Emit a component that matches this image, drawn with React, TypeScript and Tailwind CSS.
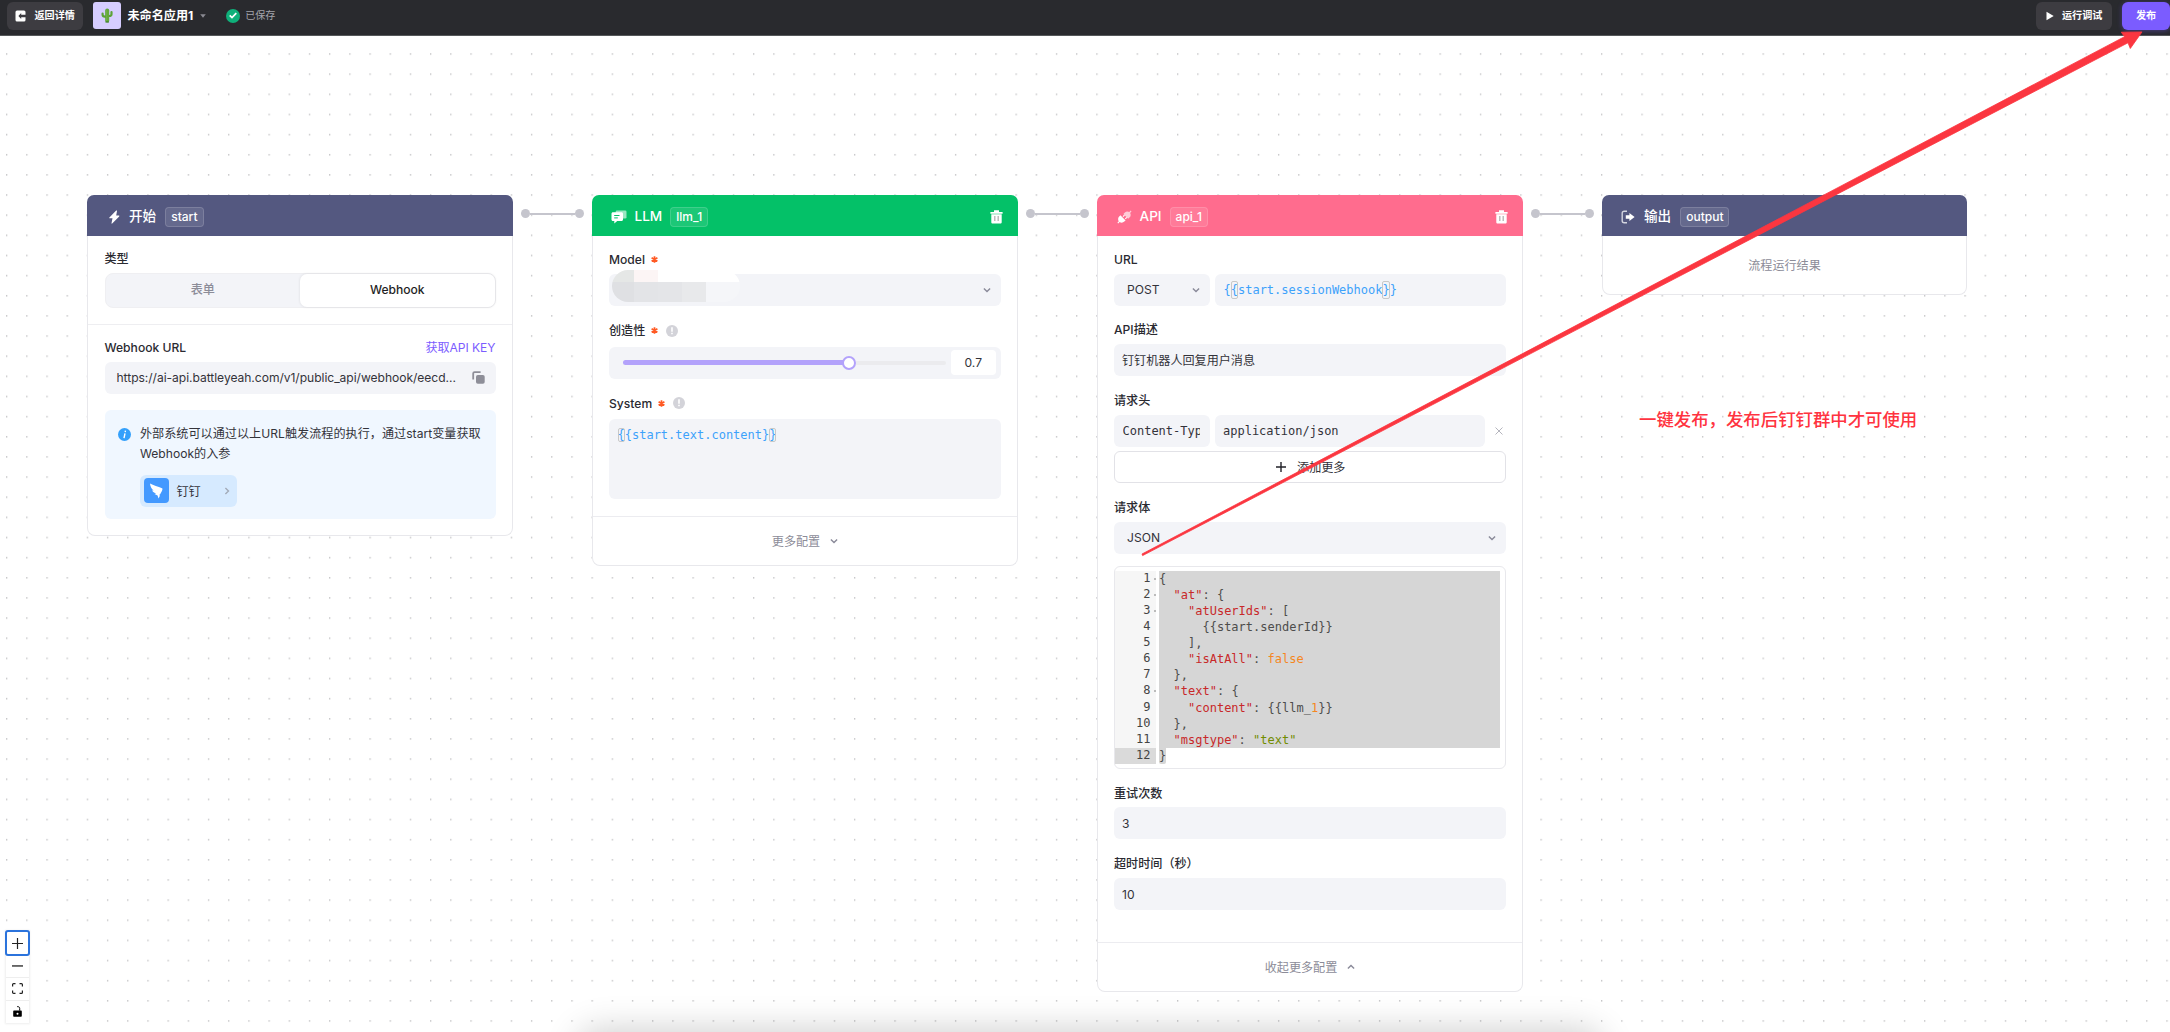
import type { ReactNode } from 'react';
import clsx from 'clsx';

const MONO = "font-['DejaVu_Sans_Mono','Noto_Sans_CJK_SC',monospace]";

function BoltIcon() {
  return (
    <svg width="11" height="14" viewBox="0 0 11 14" fill="#fff">
      <path d="M7.2.6.4 7.4c-.3.3-.1.8.3.8h2.8l-1 5c0 .4.4.6.7.3l7-7.1c.3-.3.1-.8-.3-.8H7.2l.8-4.7c0-.4-.5-.6-.8-.3Z" />
    </svg>
  );
}

function ChatIcon() {
  return (
    <svg width="16" height="14" viewBox="0 0 16 14">
      <path fill="#fff" opacity=".6" d="M6 .5h8.200a1.300 1.300 0 0 1 1.300 1.300v5.500a1.300 1.300 0 0 1-1.300 1.300H6A1.300 1.300 0 0 1 4.700 7.300V1.800A1.300 1.300 0 0 1 6 .5Z" />
      <path fill="#fff" d="M2 2.200h8.500c.9 0 1.500.6 1.500 1.500v5.800c0 .9-.6 1.500-1.500 1.500H6.200L3.300 13.400V11H2C1.100 11 .5 10.400.5 9.500V3.700C.5 2.800 1.100 2.200 2 2.200Z" />
      <path stroke="#04c168" strokeWidth="1" d="M3.200 5.500h5.300M3.200 7.900h3.600" />
    </svg>
  );
}

function PlugIcon() {
  return (
    <svg width="15" height="14" viewBox="0 0 15 14" fill="#fff">
      <path d="m3.400 5.200 5.200 5.200-1.300 1.200c-1.300 1.300-3.300 1.400-4.700.4L1.200 13.500.4 12.700l1.400-1.400C.8 9.900.9 7.800 2.200 6.500Z" />
      <path opacity=".65" d="M12.300 2.100 13.700.6l.8.8-1.400 1.500c.9 1.300.8 3.200-.4 4.400l-1.500 1.500L6.400 4l1.500-1.500c1.200-1.200 3-1.300 4.400-.4Z" />
      <path d="m5.600 6.200 1.500-1.500.8.8L6.400 7ZM7.900 8.500 9.400 7l.8.8-1.500 1.500Z" />
    </svg>
  );
}

function OutputIcon() {
  return (
    <svg width="14" height="14" viewBox="0 0 14 14" fill="none">
      <path stroke="#fff" strokeWidth="1.400" opacity=".75" d="M6 1.200H3.200C2 1.200 1.200 2 1.200 3.200v7.600c0 1.200.8 2 2 2H6" />
      <path fill="#fff" d="M8.400 2.900 13.600 7l-5.200 4.100V8.700H4.800V5.300h3.600Z" />
    </svg>
  );
}

function TrashIcon() {
  return (
    <svg width="13" height="14" viewBox="0 0 13 14">
      <path fill="#fff" d="M4 .3h5V2H4ZM.4 2h12.200v1.700H.4ZM1.300 4.300h10.400v7.900c0 .9-.5 1.400-1.400 1.400H2.700c-.9 0-1.400-.5-1.400-1.400Z" />
      <path stroke="#000" strokeOpacity=".3" strokeWidth="1.300" d="M4.800 6v5M8.200 6v5" />
    </svg>
  );
}

function Chevron({ up = false, className = 'text-[#8a8a99]' }: { up?: boolean; className?: string }) {
  return (
    <svg width="8" height="8" viewBox="0 0 8 8" fill="none" className={clsx(className, up && 'rotate-180')}>
      <path stroke="currentColor" strokeWidth="1.400" d="M.9 2.400 4 5.500l3.100-3.100" />
    </svg>
  );
}

function TipIcon() {
  return (
    <span className="flex size-3 items-center justify-center rounded-full bg-[#d3d3d9]">
      <svg width="4" height="8" viewBox="0 0 4 8" fill="#fff">
        <path d="M1.200.3h1.600v4.500H1.200ZM1.200 5.800h1.600v1.500H1.200Z" />
      </svg>
    </span>
  );
}

function Required() {
  return (
    <svg width="7" height="7" viewBox="0 0 7 7" className="ml-[6px]">
      <path stroke="#ff5a24" strokeWidth="1.700" d="M3.500.2v6.600M.6 1.800l5.800 3.400M6.400 1.800.6 5.200" />
    </svg>
  );
}

function Label({ children, className }: { children: ReactNode; className?: string }) {
  return <div className={clsx('flex h-5 items-center text-[12.1px] font-medium leading-5 text-[#2a2a31]', className)}>{children}</div>;
}

function Field({ children, className }: { children?: ReactNode; className?: string }) {
  return <div className={clsx('flex h-8 items-center rounded-md bg-[#f3f4f8] text-[12.1px] text-[#33333a]', className)}>{children}</div>;
}

type NodeProps = {
  icon: ReactNode;
  title: string;
  tag: string;
  color: string;
  width?: string;
  spacing?: string;
  deletable?: boolean;
  children: ReactNode;
};

function FlowNode({ icon, title, tag, color, width = 'w-[426px]', spacing = 'pl-[22px] gap-[9px]', deletable, children }: NodeProps) {
  return (
    <section className={clsx('relative shrink-0 rounded-lg bg-white', width)}>
      <header className={clsx('flex h-[41px] items-center rounded-t-[7px] pr-[15px] pt-[2px] text-white', color, spacing)}>
        {icon}
        <h2 className="text-[13.600px] font-medium">{title}</h2>
        <span className="flex h-5 items-center rounded-[4px] border border-white/15 bg-white/10 px-[5px] text-[12px] font-medium">{tag}</span>
        {deletable && (
          <span className="ml-auto">
            <TrashIcon />
          </span>
        )}
      </header>
      <div className="rounded-b-lg border-x border-b border-[#e8e8ec]">{children}</div>
    </section>
  );
}

function Connector() {
  return (
    <div className="mt-[14px] flex h-[9px] w-[79px] shrink-0 items-center px-2">
      <span className="size-[9px] shrink-0 rounded-full bg-[#c5c5cd]" />
      <span className="h-[2px] flex-1 bg-[#c5c5cd]" />
      <span className="size-[9px] shrink-0 rounded-full bg-[#c5c5cd]" />
    </div>
  );
}

function Brace({ children }: { children: string }) {
  return <span className="rounded-[2px] outline outline-1 -outline-offset-1 outline-[#c8c8c8]">{children}</span>;
}

function TopBar() {
  return (
    <header className="flex h-[36px] items-center border-b border-[#55585a] bg-[#292a2e] pb-[4px] pl-[7px] text-[10.100px] text-white">
      <button className="flex h-[28px] w-[75.500px] items-center rounded-md bg-[#3d3c41] pl-[8px] font-bold">
        <svg width="11" height="12" viewBox="0 0 11 12">
          <path fill="#fff" d="M2 .5h7A1.500 1.500 0 0 1 10.500 2v2.700H6.200V3L3.400 6l2.800 3V7.300h4.300V10A1.500 1.500 0 0 1 9 11.500H2A1.500 1.500 0 0 1 .5 10V2A1.500 1.500 0 0 1 2 .5Z" />
        </svg>
        <span className="ml-[8.500px] pt-px">返回详情</span>
      </button>
      <div className="ml-[10.500px] flex size-[27.500px] items-center justify-center rounded-[3px] bg-[#d6cdff]">
        <svg width="12" height="15" viewBox="0 0 12 15" fill="none" strokeLinecap="round">
          <path stroke="#5ca338" strokeWidth="4" d="M6.200 2.500v10" />
          <path stroke="#5ca338" strokeWidth="2.200" d="M1.600 5.500v1.200c0 1 .8 1.900 2.400 1.900h1M10.500 4v2.300c0 1-.9 1.700-2.300 1.700H7" />
          <path stroke="#7fb94c" strokeWidth=".6" d="M5.500 2v10.500M7 2v10.500" />
          <path stroke="#3d7a2a" strokeWidth="1" d="M4.800 14h2.800" />
        </svg>
      </div>
      <h1 className="ml-[7px] pt-px text-[12.100px] font-bold">未命名应用1</h1>
      <svg width="6" height="4" viewBox="0 0 6 4" className="ml-[7px]">
        <path fill="#8a8a92" d="M.2.200h5.600L3 3.800Z" />
      </svg>
      <span className="ml-[20px] flex size-[14px] items-center justify-center rounded-full bg-[#0fb07a]">
        <svg width="8" height="7" viewBox="0 0 8 7" fill="none">
          <path stroke="#fff" strokeWidth="1.700" d="m.7 3.300 2.300 2.300L7.300 1.200" />
        </svg>
      </span>
      <span className="ml-[5px] pt-px text-[#a3a3ab]">已保存</span>
      <button className="ml-auto flex h-[28px] w-[75.500px] items-center rounded-md bg-[#3d3c41] pl-[10px] font-bold">
        <svg width="8" height="10" viewBox="0 0 8 10">
          <path fill="#fff" d="M.5.800v8.400L7.700 5Z" />
        </svg>
        <span className="ml-[8px] pt-px">运行调试</span>
      </button>
      <button className="ml-[10px] mr-[0.500px] flex h-[28px] w-[48px] items-center justify-center rounded-md bg-[#7b5cff] pl-[1px] pt-px font-bold shadow-[0_1px_5px_#7b5cff60]">
        发布
      </button>
    </header>
  );
}

function StartNode() {
  return (
    <FlowNode icon={<BoltIcon />} title="开始" tag="start" color="bg-[#545880]">
      <div className="h-[88.500px] border-b border-[#eeeef1] px-[16.500px] pt-[11.500px]">
        <Label className="pt-[2px]">类型</Label>
        <div className="mt-[5px] flex h-[35px] rounded-lg border border-[#efeff2] bg-[#f3f4f8] text-[12.100px]">
          <div className="flex flex-1 items-center justify-center pt-px font-medium text-[#8c8c98]">表单</div>
          <div className="flex flex-1 items-center justify-center rounded-[7px] bg-white font-medium text-[#1f1f25] shadow-[0_0_2px_1px_#0000000d]">Webhook</div>
        </div>
      </div>
      <div className="px-[16.500px] pb-[16px] pt-[13px]">
        <div className="flex h-5 items-center justify-between">
          <Label>Webhook URL</Label>
          <a className="pt-[2px] text-[12.100px] tracking-[-0.050px] text-[#7b5cff]">获取API KEY</a>
        </div>
        <Field className="mt-[4px] justify-between pl-[12px] pr-[10.500px]">
          <span className="whitespace-nowrap pt-[2px] tracking-[-0.045px]">https://ai-api.battleyeah.com/v1/public_api/webhook/eecd...</span>
          <svg width="13" height="13" viewBox="0 0 13 13">
            <path fill="none" stroke="#8e8e98" strokeWidth="1.800" d="M1.200 8.500V2.600c0-.9.500-1.400 1.400-1.400h6" />
            <rect x="4" y="4" width="8.700" height="8.700" rx="1.800" fill="#8e8e98" />
          </svg>
        </Field>
        <div className="mt-[16px] flex h-[109px] rounded-md bg-[#f0f7ff] pl-[13.500px] pt-[14px]">
          <span className="mt-[4px] flex size-[13px] shrink-0 items-center justify-center rounded-full bg-[#34a0fb]">
            <svg width="5" height="9" viewBox="0 0 5 9" fill="none" stroke="#fff" strokeWidth="1.400">
              <path d="M3 3.300 2 8.200M3.500.6l-.3 1.500" />
            </svg>
          </span>
          <div className="ml-[9px] text-[12.100px] leading-[20.200px] text-[#33333a]">
            <p className="whitespace-nowrap tracking-[0.03px]">外部系统可以通过以上URL触发流程的执行，通过start变量获取</p>
            <p>Webhook的入参</p>
            <div className="mt-[11px] flex h-[32px] w-[97px] items-center rounded-md bg-[#d6eaff] pl-[3.500px]">
              <span className="flex size-[25px] items-center justify-center rounded-[4px] bg-[#4399ff]">
                <svg width="14" height="16" viewBox="0 0 14 16" fill="#fff">
                  <path d="M1 .5c3.500 2 8 3 12 4.800.7.400.6 1-.2 2.900L11 11.500l-.8.300.7.900L9.500 15.500 8.600 12.500 5.500 11l1.600-.6C4.700 9.800 3.500 8.500 3.200 7.300l1.500.2C2.500 6 1.200 3.300 1 .5Z" />
                </svg>
              </span>
              <span className="ml-[8px] pt-[2px]">钉钉</span>
              <Chevron className="ml-[22px] -rotate-90 text-[#a3abb8]" />
            </div>
          </div>
        </div>
      </div>
    </FlowNode>
  );
}

function LlmNode() {
  return (
    <FlowNode icon={<ChatIcon />} title="LLM" tag="llm_1" color="bg-[#04c168]" spacing="pl-[18.500px] gap-[8px]" deletable>
      <div className="pl-[16px] pr-[16.500px] pt-[13.500px]">
        <Label>
          Model
          <Required />
        </Label>
        <Field className="relative mt-[4px] justify-end pr-[10px]">
          {/* masked model name */}
          <div className="absolute left-[3px] top-[-4px] grid h-[32px] w-[128px] grid-cols-[22px_24px_24px_24px_34px] grid-rows-[12px_20px] overflow-hidden rounded-[16px]">
            <i className="bg-[#e5e7e6]" />
            <i className="bg-[#fcf5f5]" />
            <i className="col-span-3 bg-white" />
            <i className="bg-[#dfe0e3]" />
            <i className="bg-[#e3e4e7]" />
            <i className="bg-[#e4e5e8]" />
            <i className="bg-[#e8e9eb]" />
            <i className="bg-[#f5f6f9]" />
          </div>
          <Chevron />
        </Field>
        <Label className="mt-[15px]">
          <span className="pt-px">创造性</span>
          <Required />
          <span className="ml-[8px]">
            <TipIcon />
          </span>
        </Label>
        <Field className="mt-[6px] pl-[14px] pr-[5px]">
          <div className="flex w-[323px] items-center">
            <span className="h-[4.500px] w-[220px] rounded-l-full bg-[#b3a2fb]" />
            <span className="-ml-px size-[14px] rounded-full border-2 border-[#b3a2fb] bg-white" />
            <span className="h-[4px] flex-1 rounded-r-full bg-[#ebebee]" />
          </div>
          <div className="ml-[5px] flex h-[24.500px] flex-1 items-center justify-center rounded-[4px] bg-white pt-px">0.7</div>
        </Field>
        <Label className="mt-[14.500px]">
          <span className="pt-px">System</span>
          <Required />
          <span className="ml-[8px]">
            <TipIcon />
          </span>
        </Label>
        <div className={clsx('mt-[5.500px] h-[80px] rounded-md bg-[#f3f4f8] pl-[8.500px] pt-[8px] text-[12px] leading-[16px] text-[#3da2fb]', MONO)}>
          <Brace>{'{'}</Brace>
          {'{start.text.content}'}
          <Brace>{'}'}</Brace>
        </div>
      </div>
      <div className="mt-[17px] flex h-[49px] items-center justify-center border-t border-[#ececf0] text-[12.100px] text-[#8c8c98]">
        <span className="pt-[3px]">更多配置</span>
        <Chevron className="ml-[10px] text-[#8a8a99]" />
      </div>
    </FlowNode>
  );
}

const KEY = 'text-[#c82829]';
const NUM = 'text-[#f5871f]';
const STR = 'text-[#718c00]';

type CodeLine = { indent: number; parts: [string, string?][]; fold?: boolean };

const CODE: CodeLine[] = [
  { indent: 0, parts: [['{']], fold: true },
  { indent: 2, parts: [['"at"', KEY], [': {']], fold: true },
  { indent: 4, parts: [['"atUserIds"', KEY], [': [']], fold: true },
  { indent: 6, parts: [['{{start.senderId}}']] },
  { indent: 4, parts: [['],']] },
  { indent: 4, parts: [['"isAtAll"', KEY], [': '], ['false', NUM]] },
  { indent: 2, parts: [['},']] },
  { indent: 2, parts: [['"text"', KEY], [': {']], fold: true },
  { indent: 4, parts: [['"content"', KEY], [': {{llm_'], ['1', NUM], ['}}']] },
  { indent: 2, parts: [['},']] },
  { indent: 2, parts: [['"msgtype"', KEY], [': '], ['"text"', STR]] },
  { indent: 0, parts: [['}']] },
];

function CodeEditor() {
  return (
    <div className={clsx('mt-[12px] h-[203.500px] rounded-md border border-[#e8e8ec] bg-white pt-[4px] text-[12px] leading-[16px] tracking-[0.01px] text-[#4d4d4c]', MONO)}>
      {CODE.map((line, i) => {
        const last = i === CODE.length - 1;
        return (
          <div key={i} className="flex h-[16.125px]">
            <div className={clsx('relative w-[40.500px] pr-[5px] text-right leading-[14px] text-[#444]', last ? 'bg-[#dadada]' : 'bg-[#f6f6f6]')}>
              {i + 1}
              {line.fold && <i className="absolute right-0 top-[7px] size-[2px] bg-[#bbb]" />}
            </div>
            <div className={clsx('ml-[3.500px] whitespace-pre bg-[#d6d6d6]', last ? 'rounded-b-[2px]' : 'w-[341px]')}>
              {' '.repeat(line.indent)}
              {line.parts.map(([text, color], j) => (
                <span key={j} className={color}>
                  {text}
                </span>
              ))}
            </div>
          </div>
        );
      })}
    </div>
  );
}

function ApiNode() {
  return (
    <FlowNode icon={<PlugIcon />} title="API" tag="api_1" color="bg-[#ff6c8e]" spacing="pl-[19.500px] gap-[8px]" deletable>
      <div className="pl-[16px] pr-[16.500px] pt-[13.500px]">
        <Label>URL</Label>
        <div className="mt-[4px] flex gap-[4.500px]">
          <Field className="w-[96px] justify-between pl-[13px] pr-[10px]">
            <span className="pt-px">POST</span>
            <Chevron />
          </Field>
          <Field className={clsx('flex-1 pl-[9px] !text-[12px] !text-[#3da2fb]', MONO)}>
            {'{'}
            <Brace>{'{'}</Brace>
            {'start.sessionWebhook'}
            <Brace>{'}'}</Brace>
            {'}'}
          </Field>
        </div>
        <Label className="mt-[13.500px] pt-[2px]">API描述</Label>
        <Field className="mt-[5px] pl-[8px] pt-[2px]">钉钉机器人回复用户消息</Field>
        <Label className="mt-[13.500px] pt-[2px]">请求头</Label>
        <div className={clsx('mt-[5px] flex items-center', MONO)}>
          <Field className="w-[96px] px-[8.500px] !text-[12px]">
            <span className="w-[77px] overflow-hidden whitespace-nowrap">Content-Type</span>
          </Field>
          <Field className="ml-[4.500px] w-[270px] pl-[8.500px] !text-[12px]">application/json</Field>
          <svg width="8" height="8" viewBox="0 0 8 8" className="ml-[10.500px]" stroke="#b5b5bd" strokeWidth="1">
            <path d="m.5.500 7 7M7.500.5l-7 7" />
          </svg>
        </div>
        <button className="mt-[4.500px] flex h-[32px] w-full items-center justify-center rounded-md border border-[#e2e2e7] bg-white text-[12.100px] text-[#33333a]">
          <svg width="10" height="10" viewBox="0 0 10 10" className="ml-[2px]" stroke="#222228" strokeWidth="1.400">
            <path d="M5 0v10M0 5h10" />
          </svg>
          <span className="ml-[11px] pt-[2px]">添加更多</span>
        </button>
        <Label className="mt-[14px] pt-[2px]">请求体</Label>
        <Field className="mt-[4.500px] justify-between pl-[13px] pr-[10px]">
          <span className="pt-[2px]">JSON</span>
          <Chevron />
        </Field>
        <CodeEditor />
        <Label className="mt-[13.500px] pt-[2px]">重试次数</Label>
        <Field className="mt-[4.500px] pl-[8px] pt-[3px]">3</Field>
        <Label className="mt-[14px] pt-[2px]">超时时间（秒）</Label>
        <Field className="mt-[4.500px] pl-[8px] pt-[3px]">10</Field>
      </div>
      <div className="mt-[32px] flex h-[49px] items-center justify-center border-t border-[#ececf0] text-[12.100px] text-[#8c8c98]">
        <span className="pt-[3px]">收起更多配置</span>
        <Chevron up className="ml-[10px] text-[#8a8a99]" />
      </div>
    </FlowNode>
  );
}

function OutputNode() {
  return (
    <FlowNode icon={<OutputIcon />} title="输出" tag="output" color="bg-[#545880]" width="w-[365px]" spacing="pl-[19px] gap-[9px]">
      <div className="flex h-[58px] items-center justify-center pt-[3px] text-[12.100px] text-[#8c8c98]">流程运行结果</div>
    </FlowNode>
  );
}

function Controls() {
  return (
    <div className="absolute bottom-[9px] left-[6px] w-[23px] bg-white shadow-[0_0_2px_1px_#00000012]">
      <div className="flex h-[24px] items-center justify-center rounded-[2px] outline outline-2 -outline-offset-1 outline-[#2b73dc]">
        <svg width="11" height="11" viewBox="0 0 11 11" stroke="#222" strokeWidth="1.200">
          <path d="M5.500 0v11M0 5.500h11" />
        </svg>
      </div>
      <div className="flex h-[22.500px] items-center justify-center border-b border-[#eee]">
        <svg width="11" height="2" viewBox="0 0 11 2">
          <path fill="#222" d="M0 .3h11v1.300H0Z" />
        </svg>
      </div>
      <div className="flex h-[23px] items-center justify-center border-b border-[#eee]">
        <svg width="11" height="11" viewBox="0 0 11 11" fill="none" stroke="#222" strokeWidth="1.200">
          <path d="M.6 3.500V1.600a1 1 0 0 1 1-1h1.900M7.500.6h1.900a1 1 0 0 1 1 1v1.900M10.400 7.500v1.900a1 1 0 0 1-1 1H7.500M3.500 10.400H1.600a1 1 0 0 1-1-1V7.500" />
        </svg>
      </div>
      <div className="flex h-[22.500px] items-center justify-center">
        <svg width="9" height="11" viewBox="0 0 9 11">
          <path fill="#000" fillRule="evenodd" d="M1.200 4.600h6.600c.6 0 1 .4 1 1v4.200c0 .6-.4 1-1 1H1.200c-.6 0-1-.4-1-1V5.600c0-.6.4-1 1-1Zm3.300 2.100a1 1 0 1 0 0 2 1 1 0 0 0 0-2Z" />
          <path fill="none" stroke="#000" d="M6.700 4.600V2.400C6.700 1.300 6 .6 4.200.6" />
        </svg>
      </div>
    </div>
  );
}

export default function App() {
  return (
    <div className="relative flex h-[1032px] w-[2170px] flex-col overflow-hidden bg-white font-['Inter','Noto_Sans_CJK_SC',sans-serif]">
      <TopBar />
      <main className="relative flex-1 overflow-hidden">
        <svg width="2170" height="996" className="absolute inset-0">
          <defs>
            <pattern id="dots" x="6" y="17.200" width="20.190" height="20.145" patternUnits="userSpaceOnUse">
              <rect width="1.300" height="1.600" fill="#c6c6c8" />
            </pattern>
          </defs>
          <rect width="2170" height="996" fill="url(#dots)" />
        </svg>
        <div className="absolute left-[592px] top-[1007px] h-[40px] w-[996px] rounded-lg shadow-[0_0_34px_14px_#00000030]" />
        <div className="relative flex items-start pl-[87px] pt-[159px]">
          <StartNode />
          <Connector />
          <LlmNode />
          <Connector />
          <ApiNode />
          <Connector />
          <OutputNode />
        </div>
        <Controls />
      </main>
      <p className="absolute left-[1639px] top-[407px] whitespace-nowrap text-[17.400px] font-medium leading-[26px] text-[#ff3340] [text-shadow:0_0_2px_#fff,0_0_2px_#fff]">
        一键发布，发布后钉钉群中才可使用
      </p>
      <svg width="2170" height="1032" viewBox="0 0 2170 1032" className="pointer-events-none absolute inset-0">
        <path fill="#fb3640" stroke="#fb3640" strokeWidth=".8" strokeLinejoin="round" d="M1142 554 2124.500 36.700 2121.300 32.200 2142 31.900 2130.300 48.500 2128 42.800 1142.600 555.600Z" />
      </svg>
    </div>
  );
}
